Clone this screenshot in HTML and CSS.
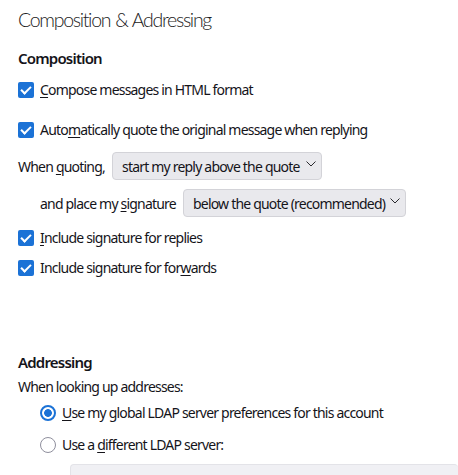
FILE: index.html
```html
<!DOCTYPE html>
<html>
<head>
<meta charset="utf-8">
<link rel="stylesheet" href="styles.css">
</head>
<body>
<div class="page">
  <h1 class="title">Composition &amp; Addressing</h1>
  <h2 class="heading h-comp">Composition</h2>
  <label class="check r-cb1"><span class="box"></span><span><u>C</u>ompose messages in HTML format</span></label>
  <label class="check r-cb2"><span class="box"></span><span>Auto<u>m</u>atically quote the original message when replying</span></label>
  <div class="selrow r-quote">
    <span class="lbl">When <u>q</u>uoting,</span>
    <span class="select s1"><span class="val">start my reply above the quote</span><svg class="chev" viewBox="0 0 10 6"><path d="M0.5 0.5 L5 5 L9.5 0.5" /></svg></span>
  </div>
  <div class="selrow r-sig">
    <span class="lbl">and place my <u>s</u>ignature</span>
    <span class="select s2"><span class="val">below the quote (recommended)</span><svg class="chev" viewBox="0 0 10 6"><path d="M0.5 0.5 L5 5 L9.5 0.5" /></svg></span>
  </div>
  <label class="check r-cb3"><span class="box"></span><span><u>I</u>nclude signature for replies</span></label>
  <label class="check r-cb4"><span class="box"></span><span>Include signature for for<u>w</u>ards</span></label>
  <h2 class="heading h-addr">Addressing</h2>
  <div class="plain r-look">When looking up addresses:</div>
  <label class="radio r-rad1"><span class="dot on"></span><span><u>U</u>se my global LDAP server preferences for this account</span></label>
  <label class="radio r-rad2"><span class="dot"></span><span>Use a <u>d</u>ifferent LDAP server:</span></label>
  <div class="ldap"></div>
</div>
</body>
</html>
```

FILE: styles.css
```css
html, body {
  margin: 0;
  padding: 0;
  background: #ffffff;
  overflow: hidden;
}
body {
  font-family: "Noto Sans", "Open Sans", sans-serif;
  font-size: 14px;
  letter-spacing: -0.8px;
  color: #15141a;
}
.page {
  padding-left: 18px;
  display: flex;
  flex-direction: column;
}
u {
  text-decoration-thickness: 1px;
  text-underline-offset: 2px;
}
.title {
  margin: 0;
  height: 40px;
  line-height: 40px;
  font-family: "Lato", "Noto Sans", sans-serif;
  font-size: 19.5px;
  font-weight: 300;
  letter-spacing: -1.3px;
  word-spacing: 1px;
  color: #1c1b22;
}
.heading {
  margin: 0;
  height: 20px;
  line-height: 20px;
  font-size: 15px;
  font-weight: 600;
  letter-spacing: -0.8px;
}
.h-comp { margin-top: 8px; }
.check, .radio, .plain {
  display: flex;
  align-items: center;
  height: 20px;
  line-height: 20px;
}
.box {
  width: 16px;
  height: 16px;
  border-radius: 2px;
  background: #1b72d6;
  margin-right: 6px;
  flex: none;
  position: relative;
}
.box::after {
  content: "";
  position: absolute;
  left: 5px;
  top: 2px;
  width: 4px;
  height: 8px;
  border: solid #fff;
  border-width: 0 2px 2px 0;
  transform: rotate(45deg);
}
.r-cb1 { margin-top: 12px; }
.r-cb2 { margin-top: 20px; }
.selrow {
  display: flex;
  align-items: center;
  height: 28px;
}
.r-quote { margin-top: 12px; }
.r-sig { margin-top: 9px; padding-left: 22px; }
.select {
  display: flex;
  align-items: center;
  justify-content: space-between;
  border: 1px solid #d3d3d8;
  border-radius: 4px;
  background: #e9e9ed;
  padding: 0 5px 0 9px;
  box-sizing: border-box;
  height: 28px;
}
.s1 { width: 210px; }
.s2 { width: 223px; }
.r-quote .lbl { width: 94px; }
.r-sig .lbl { width: 143px; }
.chev {
  width: 10px;
  height: 6px;
  margin-left: 4px;
  margin-bottom: 4px;
  fill: none;
  stroke: #2a2a2e;
  stroke-width: 1;
  flex: none;
}
.r-cb3 { margin-top: 11px; }
.r-cb4 { margin-top: 10px; }
.h-addr { margin-top: 74px; }
.r-look { margin-top: 5px; }
.radio { padding-left: 22px; }
.r-rad1 { margin-top: 6px; }
.r-rad2 { margin-top: 12px; }
.dot {
  width: 16px;
  height: 16px;
  box-sizing: border-box;
  border-radius: 50%;
  border: 1px solid #8f8f9d;
  margin-right: 6px;
  flex: none;
  background: #fff;
}
.dot.on {
  border: 2px solid #1b72d6;
  background: radial-gradient(circle, #1b72d6 0 3.5px, #fff 4.2px);
}
.ldap {
  margin-top: 9px;
  margin-left: 52px;
  height: 30px;
  background: #f0f0f4;
  border: 1px solid #e3e3e8;
  border-radius: 4px;
  border-right: none;
}
```
